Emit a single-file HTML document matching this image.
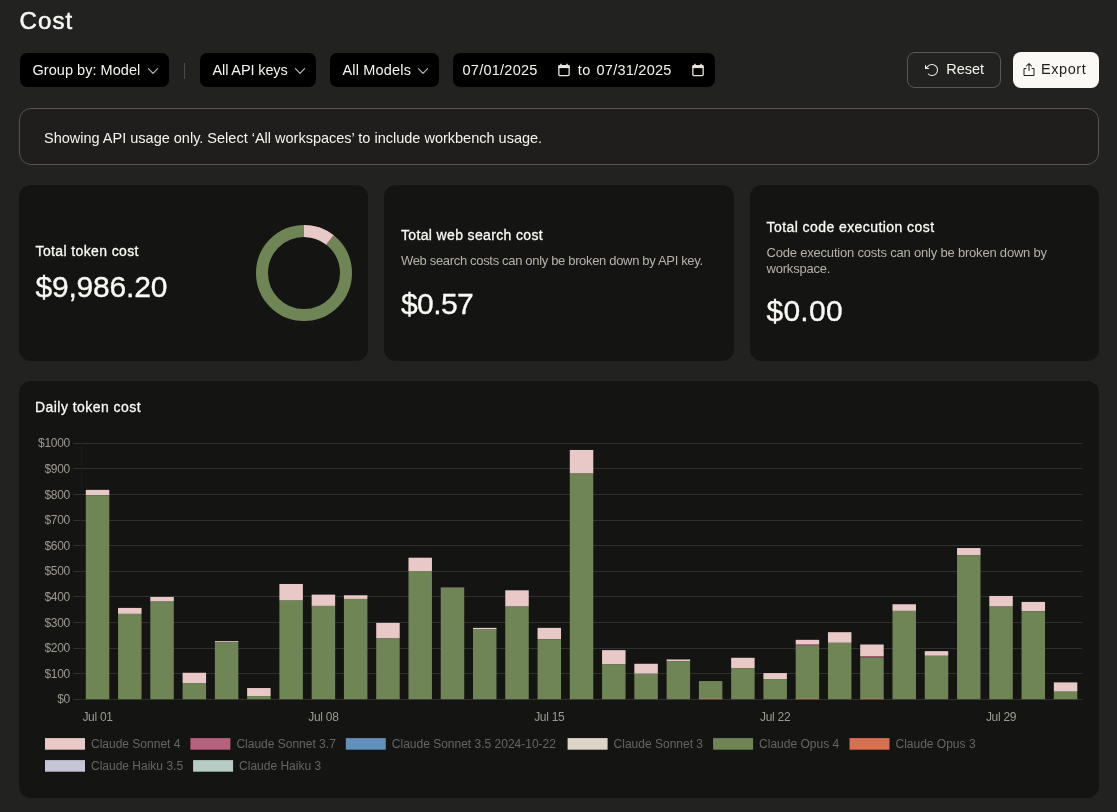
<!DOCTYPE html>
<html lang="en"><head><meta charset="utf-8"><title>Cost</title>
<style>
*{box-sizing:border-box}
html,body{margin:0;padding:0}
body{width:1117px;height:812px;overflow:hidden;background:#222221;color:#faf9f5;font-family:"Liberation Sans",Arial,sans-serif;position:relative;-webkit-font-smoothing:antialiased}
#root{position:absolute;left:0;top:0;width:1117px;height:812px;will-change:transform}
.abs{position:absolute}
h1{position:absolute;left:19.500px;top:5.700px;margin:0;font-size:24px;line-height:30px;font-weight:400;letter-spacing:1.1px;-webkit-text-stroke:.5px #faf9f5}
.dd{position:absolute;top:53px;height:34px;background:#000;border-radius:7px;font-size:14.5px;line-height:34px;padding-left:12.5px;white-space:nowrap;color:#f5f4ee}
.dd svg{position:absolute;top:9px;width:16px;height:16px}
.sep{position:absolute;left:184px;top:62.5px;width:1px;height:16px;background:#4b4b48}
.date{position:absolute;left:453px;top:53px;width:262px;height:34px;background:#000;border-radius:7px;font-size:14.5px;line-height:34px;color:#f5f4ee;letter-spacing:.25px}
.date span{position:absolute;top:0}
.date svg{position:absolute;top:9.600px;width:14px;height:14px}
.btn{position:absolute;top:52px;height:36px;border-radius:8px;font-size:14.5px;line-height:36px;white-space:nowrap}
.btn svg{position:absolute;top:10px;width:16px;height:16px}
.btn span{position:absolute;top:-1px}
.reset{left:907px;width:94px;border:1px solid #5a5954;color:#f5f4ee;line-height:34px}
.export{left:1013px;width:86px;background:#faf9f5;color:#1f1e1d}
.banner{position:absolute;left:19px;top:108px;width:1080px;height:57px;border:1px solid #555450;border-radius:12px;background:#1f1e1d;font-size:14.5px;line-height:58px;padding-left:24px;color:#f5f4ee}
.card{position:absolute;top:185px;height:176px;background:#141413;border-radius:12px}
.t{position:absolute;font-size:14px;line-height:18px;white-space:nowrap;color:#faf9f5;-webkit-text-stroke:.3px #faf9f5}
.s{position:absolute;font-size:13px;line-height:15.4px;color:#b5b3a9}
.n{position:absolute;font-size:30px;line-height:36px;white-space:nowrap;color:#faf9f5;-webkit-text-stroke:.35px #faf9f5}
.chartcard{position:absolute;left:19px;top:381px;width:1080px;height:417px;background:#141413;border-radius:12px;overflow:hidden}
.chart{position:absolute;left:0;top:0}
.tk{font-family:"Liberation Sans",Arial,sans-serif;font-size:12px;letter-spacing:-.3px;fill:#9c9a92}
.lg{font-family:"Liberation Sans",Arial,sans-serif;font-size:12px;fill:#666}
</style></head><body>
<div id="root">
<h1>Cost</h1>

<div class="dd" style="left:20px;width:149px"><span style="letter-spacing:.04px">Group by: Model</span><svg style="left:125px" viewBox="0 0 16 16"><path d="M3.400 6.600L8 11.300L12.600 6.600" fill="none" stroke="#bfbdb3" stroke-width="1.1" stroke-linecap="round" stroke-linejoin="round"/></svg></div>
<div class="sep"></div>
<div class="dd" style="left:200px;width:116px"><span style="letter-spacing:-.12px">All API keys</span><svg style="left:92px" viewBox="0 0 16 16"><path d="M3.400 6.600L8 11.300L12.600 6.600" fill="none" stroke="#bfbdb3" stroke-width="1.1" stroke-linecap="round" stroke-linejoin="round"/></svg></div>
<div class="dd" style="left:330px;width:109px"><span style="letter-spacing:.18px">All Models</span><svg style="left:85px" viewBox="0 0 16 16"><path d="M3.400 6.600L8 11.300L12.600 6.600" fill="none" stroke="#bfbdb3" stroke-width="1.1" stroke-linecap="round" stroke-linejoin="round"/></svg></div>

<div class="date">
<span style="left:9.5px">07/01/2025</span>
<svg style="left:104.1px" viewBox="0 0 14 14"><rect x="1.85" y="2.65" width="10.3" height="10" rx="1.1" fill="none" stroke="#e6e4dc" stroke-width="1.3"/><rect x="1.5" y="2.2" width="11" height="2.9" fill="#e6e4dc"/><rect x="3.2" y=".8" width="1.5" height="1.8" fill="#e6e4dc"/><rect x="9.3" y=".8" width="1.500" height="1.8" fill="#e6e4dc"/></svg>
<span style="left:124.800px;letter-spacing:.5px">to</span>
<span style="left:143.500px">07/31/2025</span>
<svg style="left:237.7px" viewBox="0 0 14 14"><rect x="1.85" y="2.65" width="10.3" height="10" rx="1.1" fill="none" stroke="#e6e4dc" stroke-width="1.3"/><rect x="1.5" y="2.2" width="11" height="2.9" fill="#e6e4dc"/><rect x="3.2" y=".8" width="1.5" height="1.8" fill="#e6e4dc"/><rect x="9.3" y=".8" width="1.500" height="1.8" fill="#e6e4dc"/></svg>
</div>

<div class="btn reset"><svg style="left:15.500px;top:9px" viewBox="0 0 256 256"><path fill="#f5f4ee" d="M224,128a96,96,0,0,1-94.710,96H128A95.380,95.380,0,0,1,62.100,197.800a8,8,0,0,1,11-11.630A80,80,0,1,0,71.430,71.390a3.070,3.070,0,0,1-.26.250L44.590,96H72a8,8,0,0,1,0,16H24a8,8,0,0,1-8-8V56a8,8,0,0,1,16,0V85.800L60.250,60A96,96,0,0,1,224,128Z"/></svg><span style="left:38.300px;letter-spacing:-.05px">Reset</span></div>
<div class="btn export"><svg style="left:7.700px" viewBox="0 0 256 256"><path fill="#1f1e1d" d="M216,112v96a16,16,0,0,1-16,16H56a16,16,0,0,1-16-16V112A16,16,0,0,1,56,96H80a8,8,0,0,1,0,16H56v96H200V112H176a8,8,0,0,1,0-16h24A16,16,0,0,1,216,112ZM93.660,69.660,120,43.310V136a8,8,0,0,0,16,0V43.310l26.340,26.350a8,8,0,0,0,11.320-11.320l-40-40a8,8,0,0,0-11.320,0l-40,40A8,8,0,0,0,93.660,69.660Z"/></svg><span style="left:28px;letter-spacing:.55px">Export</span></div>

<div class="banner">Showing API usage only. Select ‘All workspaces’ to include workbench usage.</div>

<div class="card" style="left:19px;width:349px">
<div class="t" style="left:16.500px;top:57px;letter-spacing:.38px">Total token cost</div>
<div class="n" style="left:16.500px;top:84px;letter-spacing:-.2px">$9,986.20</div>
<svg class="abs" style="left:233px;top:36px" width="104" height="104" viewBox="-52 -52 104 104">
<circle r="42" fill="none" stroke="#6f8556" stroke-width="12"/>
<path d="M0 -48A48 48 0 0 1 29.68 -37.72L22.260 -28.290A36 36 0 0 0 0 -36Z" fill="#e8c9c8"/>
<path d="M29.42 -37.93A48 48 0 0 1 29.94 -37.52L22.450 -28.140A36 36 0 0 0 22.060 -28.450Z" fill="#b8617e"/>
</svg>
</div>
<div class="card" style="left:384px;width:350px">
<div class="t" style="left:17px;top:41px;letter-spacing:.35px">Total web search cost</div>
<div class="s" style="left:17px;top:68px;letter-spacing:-.33px;white-space:nowrap">Web search costs can only be broken down by API key.</div>
<div class="n" style="left:17px;top:100.5px;letter-spacing:-.6px">$0.57</div>
</div>
<div class="card" style="left:750px;width:349px">
<div class="t" style="left:16.500px;top:33px;letter-spacing:.43px">Total code execution cost</div>
<div class="s" style="left:16.500px;top:59.600px;width:310px;letter-spacing:-.2px;line-height:16.300px">Code execution costs can only be broken down by workspace.</div>
<div class="n" style="left:16.500px;top:108px;letter-spacing:.25px">$0.00</div>
</div>

<div class="chartcard">
<div class="t" style="left:16px;top:17px;letter-spacing:.45px">Daily token cost</div>
<svg class="chart" width="1080" height="417" viewBox="19 381 1080 417">
<rect x="73.4" y="699" width="1008.6" height="1" fill="#30302e"/>
<text x="69.9" y="703.30" text-anchor="end" class="tk">$0</text>
<rect x="73.4" y="673" width="1008.6" height="1" fill="#30302e"/>
<text x="69.9" y="677.70" text-anchor="end" class="tk">$100</text>
<rect x="73.4" y="648" width="1008.6" height="1" fill="#30302e"/>
<text x="69.9" y="652.10" text-anchor="end" class="tk">$200</text>
<rect x="73.4" y="622" width="1008.6" height="1" fill="#30302e"/>
<text x="69.9" y="626.50" text-anchor="end" class="tk">$300</text>
<rect x="73.4" y="596" width="1008.6" height="1" fill="#30302e"/>
<text x="69.9" y="600.90" text-anchor="end" class="tk">$400</text>
<rect x="73.4" y="571" width="1008.6" height="1" fill="#30302e"/>
<text x="69.9" y="575.30" text-anchor="end" class="tk">$500</text>
<rect x="73.4" y="545" width="1008.6" height="1" fill="#30302e"/>
<text x="69.9" y="549.70" text-anchor="end" class="tk">$600</text>
<rect x="73.4" y="520" width="1008.6" height="1" fill="#30302e"/>
<text x="69.9" y="524.10" text-anchor="end" class="tk">$700</text>
<rect x="73.4" y="494" width="1008.6" height="1" fill="#30302e"/>
<text x="69.9" y="498.50" text-anchor="end" class="tk">$800</text>
<rect x="73.4" y="468" width="1008.6" height="1" fill="#30302e"/>
<text x="69.9" y="472.90" text-anchor="end" class="tk">$900</text>
<rect x="73.4" y="443" width="1008.6" height="1" fill="#30302e"/>
<text x="69.9" y="447.30" text-anchor="end" class="tk">$1000</text>
<rect x="81" y="443" width="1" height="257" fill="#1a1a19"/>
<rect x="85.79" y="489.87" width="23.49" height="5.32" fill="#e8c9c8"/>
<rect x="85.79" y="495.19" width="23.49" height="204.01" fill="#6f8556"/>
<rect x="118.06" y="607.91" width="23.49" height="5.99" fill="#e8c9c8"/>
<rect x="118.06" y="613.89" width="23.49" height="85.31" fill="#6f8556"/>
<rect x="150.32" y="596.94" width="23.49" height="4.66" fill="#e8c9c8"/>
<rect x="150.32" y="601.59" width="23.49" height="97.61" fill="#6f8556"/>
<rect x="182.59" y="672.75" width="23.49" height="10.31" fill="#e8c9c8"/>
<rect x="182.59" y="683.06" width="23.49" height="16.14" fill="#6f8556"/>
<rect x="214.86" y="641.16" width="23.49" height="1.33" fill="#e8c9c8"/>
<rect x="214.86" y="642.49" width="23.49" height="56.71" fill="#6f8556"/>
<rect x="247.13" y="688.04" width="23.49" height="7.98" fill="#e8c9c8"/>
<rect x="247.13" y="696.03" width="23.49" height="3.17" fill="#6f8556"/>
<rect x="279.39" y="583.97" width="23.49" height="16.63" fill="#e8c9c8"/>
<rect x="279.39" y="600.59" width="23.49" height="98.61" fill="#6f8556"/>
<rect x="311.66" y="594.61" width="23.49" height="11.31" fill="#e8c9c8"/>
<rect x="311.66" y="605.91" width="23.49" height="93.29" fill="#6f8556"/>
<rect x="343.93" y="595.27" width="23.49" height="3.66" fill="#e8c9c8"/>
<rect x="343.93" y="598.93" width="23.49" height="100.27" fill="#6f8556"/>
<rect x="376.20" y="622.87" width="23.49" height="15.63" fill="#e8c9c8"/>
<rect x="376.20" y="638.50" width="23.49" height="60.70" fill="#6f8556"/>
<rect x="408.47" y="557.70" width="23.49" height="13.30" fill="#e8c9c8"/>
<rect x="408.47" y="571.00" width="23.49" height="128.20" fill="#6f8556"/>
<rect x="440.73" y="587.63" width="23.49" height="0.33" fill="#e8c9c8"/>
<rect x="440.73" y="587.96" width="23.49" height="111.24" fill="#6f8556"/>
<rect x="473.00" y="627.86" width="23.49" height="1.66" fill="#e8c9c8"/>
<rect x="473.00" y="629.52" width="23.49" height="69.68" fill="#6f8556"/>
<rect x="505.27" y="590.29" width="23.49" height="16.29" fill="#e8c9c8"/>
<rect x="505.27" y="606.58" width="23.49" height="92.62" fill="#6f8556"/>
<rect x="537.54" y="627.86" width="23.49" height="11.31" fill="#e8c9c8"/>
<rect x="537.54" y="639.17" width="23.49" height="60.03" fill="#6f8556"/>
<rect x="569.80" y="449.97" width="23.49" height="23.61" fill="#e8c9c8"/>
<rect x="569.80" y="473.57" width="23.49" height="225.63" fill="#6f8556"/>
<rect x="602.07" y="650.14" width="23.49" height="14.30" fill="#e8c9c8"/>
<rect x="602.07" y="664.44" width="23.49" height="34.76" fill="#6f8556"/>
<rect x="634.34" y="663.77" width="23.49" height="9.98" fill="#e8c9c8"/>
<rect x="634.34" y="673.75" width="23.49" height="25.45" fill="#6f8556"/>
<rect x="666.61" y="659.45" width="23.49" height="1.66" fill="#e8c9c8"/>
<rect x="666.61" y="661.11" width="23.49" height="38.09" fill="#6f8556"/>
<rect x="698.88" y="681.06" width="23.49" height="18.14" fill="#6f8556"/>
<rect x="698.88" y="698.60" width="23.49" height="0.6" fill="#d67051"/>
<rect x="731.14" y="657.79" width="23.49" height="10.31" fill="#e8c9c8"/>
<rect x="731.14" y="668.09" width="23.49" height="31.11" fill="#6f8556"/>
<rect x="763.41" y="673.08" width="23.49" height="5.99" fill="#e8c9c8"/>
<rect x="763.41" y="679.07" width="23.49" height="20.13" fill="#6f8556"/>
<rect x="795.68" y="639.83" width="23.49" height="4.82" fill="#e8c9c8"/>
<rect x="795.68" y="644.65" width="23.49" height="1.16" fill="#b8617e"/>
<rect x="795.68" y="645.82" width="23.49" height="53.38" fill="#6f8556"/>
<rect x="795.68" y="698.60" width="23.49" height="0.6" fill="#d67051"/>
<rect x="827.95" y="632.18" width="23.49" height="10.64" fill="#e8c9c8"/>
<rect x="827.95" y="642.82" width="23.49" height="56.38" fill="#6f8556"/>
<rect x="860.21" y="644.49" width="23.49" height="11.64" fill="#e8c9c8"/>
<rect x="860.21" y="656.12" width="23.49" height="1.33" fill="#b8617e"/>
<rect x="860.21" y="657.45" width="23.49" height="41.75" fill="#6f8556"/>
<rect x="860.21" y="698.60" width="23.49" height="0.6" fill="#d67051"/>
<rect x="892.48" y="604.25" width="23.49" height="6.65" fill="#e8c9c8"/>
<rect x="892.48" y="610.90" width="23.49" height="88.30" fill="#6f8556"/>
<rect x="924.75" y="651.14" width="23.49" height="4.66" fill="#e8c9c8"/>
<rect x="924.75" y="655.79" width="23.49" height="43.41" fill="#6f8556"/>
<rect x="957.02" y="548.06" width="23.49" height="7.32" fill="#e8c9c8"/>
<rect x="957.02" y="555.37" width="23.49" height="143.83" fill="#6f8556"/>
<rect x="989.29" y="595.94" width="23.49" height="10.64" fill="#e8c9c8"/>
<rect x="989.29" y="606.58" width="23.49" height="92.62" fill="#6f8556"/>
<rect x="1021.55" y="601.92" width="23.49" height="9.31" fill="#e8c9c8"/>
<rect x="1021.55" y="611.23" width="23.49" height="87.97" fill="#6f8556"/>
<rect x="1053.82" y="682.39" width="23.49" height="9.31" fill="#e8c9c8"/>
<rect x="1053.82" y="691.70" width="23.49" height="7.50" fill="#6f8556"/>
<text x="97.53" y="720.8" text-anchor="middle" class="tk">Jul 01</text>
<text x="323.41" y="720.8" text-anchor="middle" class="tk">Jul 08</text>
<text x="549.28" y="720.8" text-anchor="middle" class="tk">Jul 15</text>
<text x="775.16" y="720.8" text-anchor="middle" class="tk">Jul 22</text>
<text x="1001.03" y="720.8" text-anchor="middle" class="tk">Jul 29</text>
<rect x="45.00" y="738.10" width="40" height="11.6" fill="#e8c9c8"/>
<text x="91.00" y="748.30" class="lg">Claude Sonnet 4</text>
<rect x="190.40" y="738.10" width="40" height="11.6" fill="#b8617e"/>
<text x="236.40" y="748.30" class="lg">Claude Sonnet 3.7</text>
<rect x="345.80" y="738.10" width="40" height="11.6" fill="#628fbc"/>
<text x="391.80" y="748.30" class="lg">Claude Sonnet 3.5 2024-10-22</text>
<rect x="567.60" y="738.10" width="40" height="11.6" fill="#ddd5c7"/>
<text x="613.60" y="748.30" class="lg">Claude Sonnet 3</text>
<rect x="713.10" y="738.10" width="40" height="11.6" fill="#6f8556"/>
<text x="759.10" y="748.30" class="lg">Claude Opus 4</text>
<rect x="849.50" y="738.10" width="40" height="11.6" fill="#d67051"/>
<text x="895.50" y="748.30" class="lg">Claude Opus 3</text>
<rect x="45.00" y="760.10" width="40" height="11.6" fill="#c6c5d6"/>
<text x="91.00" y="770.30" class="lg">Claude Haiku 3.5</text>
<rect x="193.10" y="760.10" width="40" height="11.6" fill="#b6cbc4"/>
<text x="239.10" y="770.30" class="lg">Claude Haiku 3</text>
</svg>
</div>
</div>
</body></html>
